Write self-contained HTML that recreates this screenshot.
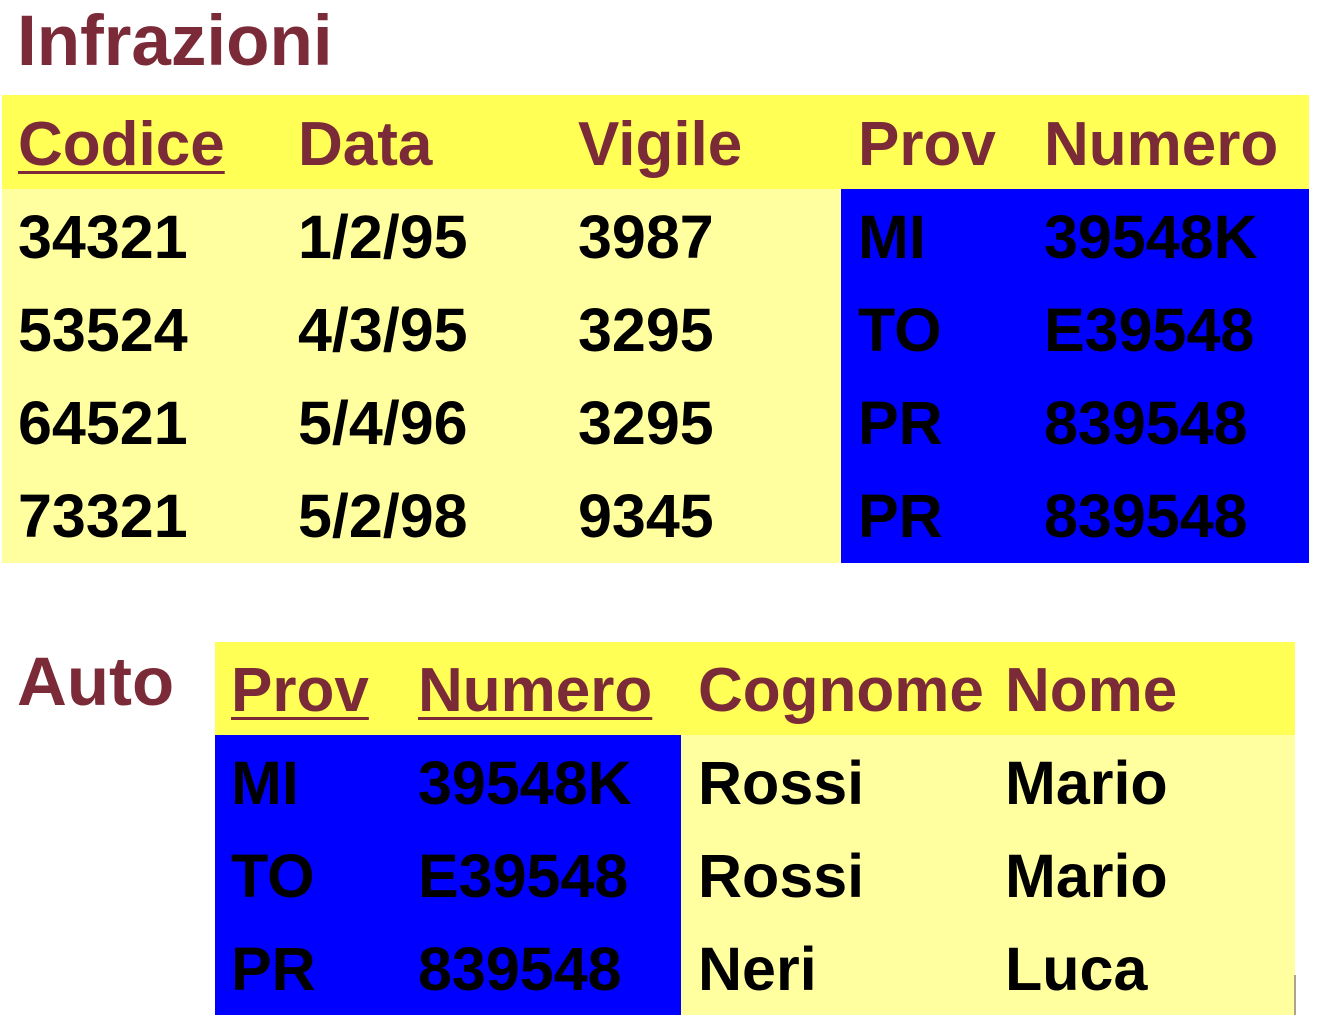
<!DOCTYPE html>
<html><head><meta charset="utf-8"><style>
html,body{margin:0;padding:0;background:#fff;width:1320px;height:1032px;overflow:hidden;position:relative;font-family:"Liberation Sans",Arial,sans-serif;font-weight:bold}
.b{position:absolute}
.t{position:absolute;white-space:nowrap;line-height:normal}
.h{color:#7b2a37;font-size:62px}
.d{color:#000;font-size:61px}
.u{text-decoration:underline;text-decoration-thickness:3px;text-underline-offset:6px}
</style></head><body>
<div class="b" style="left:2px;top:95px;width:1307px;height:94px;background:#ffff55"></div>
<div class="b" style="left:2px;top:189px;width:839px;height:374px;background:#ffff9f"></div>
<div class="b" style="left:841px;top:189px;width:468px;height:374px;background:#0000ff"></div>

<div class="b" style="left:215px;top:642px;width:1080px;height:93px;background:#ffff55"></div>
<div class="b" style="left:681px;top:735px;width:614px;height:280px;background:#ffff9f"></div>
<div class="b" style="left:215px;top:735px;width:466px;height:280px;background:#0000ff"></div>
<div class="b" style="left:1294px;top:975px;width:2px;height:40px;background:#b0a090"></div>

<div class="t" style="left:17px;top:1px;font-size:71px;color:#7b2a37">Infrazioni</div>
<div class="t" style="left:17px;top:642px;font-size:69px;color:#7b2a37">Auto</div>

<div class="t h u" style="left:18px;top:109px">Codice</div>
<div class="t h" style="left:298px;top:109px">Data</div>
<div class="t h" style="left:578px;top:109px">Vigile</div>
<div class="t h" style="left:858px;top:109px">Prov</div>
<div class="t h" style="left:1044px;top:109px">Numero</div>

<div class="t d" style="left:18px;top:202px">34321</div>
<div class="t d" style="left:298px;top:202px">1/2/95</div>
<div class="t d" style="left:578px;top:202px">3987</div>
<div class="t d" style="left:858px;top:202px">MI</div>
<div class="t d" style="left:1044px;top:202px">39548K</div>

<div class="t d" style="left:18px;top:295px">53524</div>
<div class="t d" style="left:298px;top:295px">4/3/95</div>
<div class="t d" style="left:578px;top:295px">3295</div>
<div class="t d" style="left:858px;top:295px">TO</div>
<div class="t d" style="left:1044px;top:295px">E39548</div>

<div class="t d" style="left:18px;top:388px">64521</div>
<div class="t d" style="left:298px;top:388px">5/4/96</div>
<div class="t d" style="left:578px;top:388px">3295</div>
<div class="t d" style="left:858px;top:388px">PR</div>
<div class="t d" style="left:1044px;top:388px">839548</div>

<div class="t d" style="left:18px;top:481px">73321</div>
<div class="t d" style="left:298px;top:481px">5/2/98</div>
<div class="t d" style="left:578px;top:481px">9345</div>
<div class="t d" style="left:858px;top:481px">PR</div>
<div class="t d" style="left:1044px;top:481px">839548</div>

<div class="t h u" style="left:231px;top:655px">Prov</div>
<div class="t h u" style="left:418px;top:655px">Numero</div>
<div class="t h" style="left:698px;top:655px">Cognome</div>
<div class="t h" style="left:1005px;top:655px">Nome</div>

<div class="t d" style="left:231px;top:748px">MI</div>
<div class="t d" style="left:418px;top:748px">39548K</div>
<div class="t d" style="left:698px;top:748px">Rossi</div>
<div class="t d" style="left:1005px;top:748px">Mario</div>

<div class="t d" style="left:231px;top:841px">TO</div>
<div class="t d" style="left:418px;top:841px">E39548</div>
<div class="t d" style="left:698px;top:841px">Rossi</div>
<div class="t d" style="left:1005px;top:841px">Mario</div>

<div class="t d" style="left:231px;top:934px">PR</div>
<div class="t d" style="left:418px;top:934px">839548</div>
<div class="t d" style="left:698px;top:934px">Neri</div>
<div class="t d" style="left:1005px;top:934px">Luca</div>
</body></html>
